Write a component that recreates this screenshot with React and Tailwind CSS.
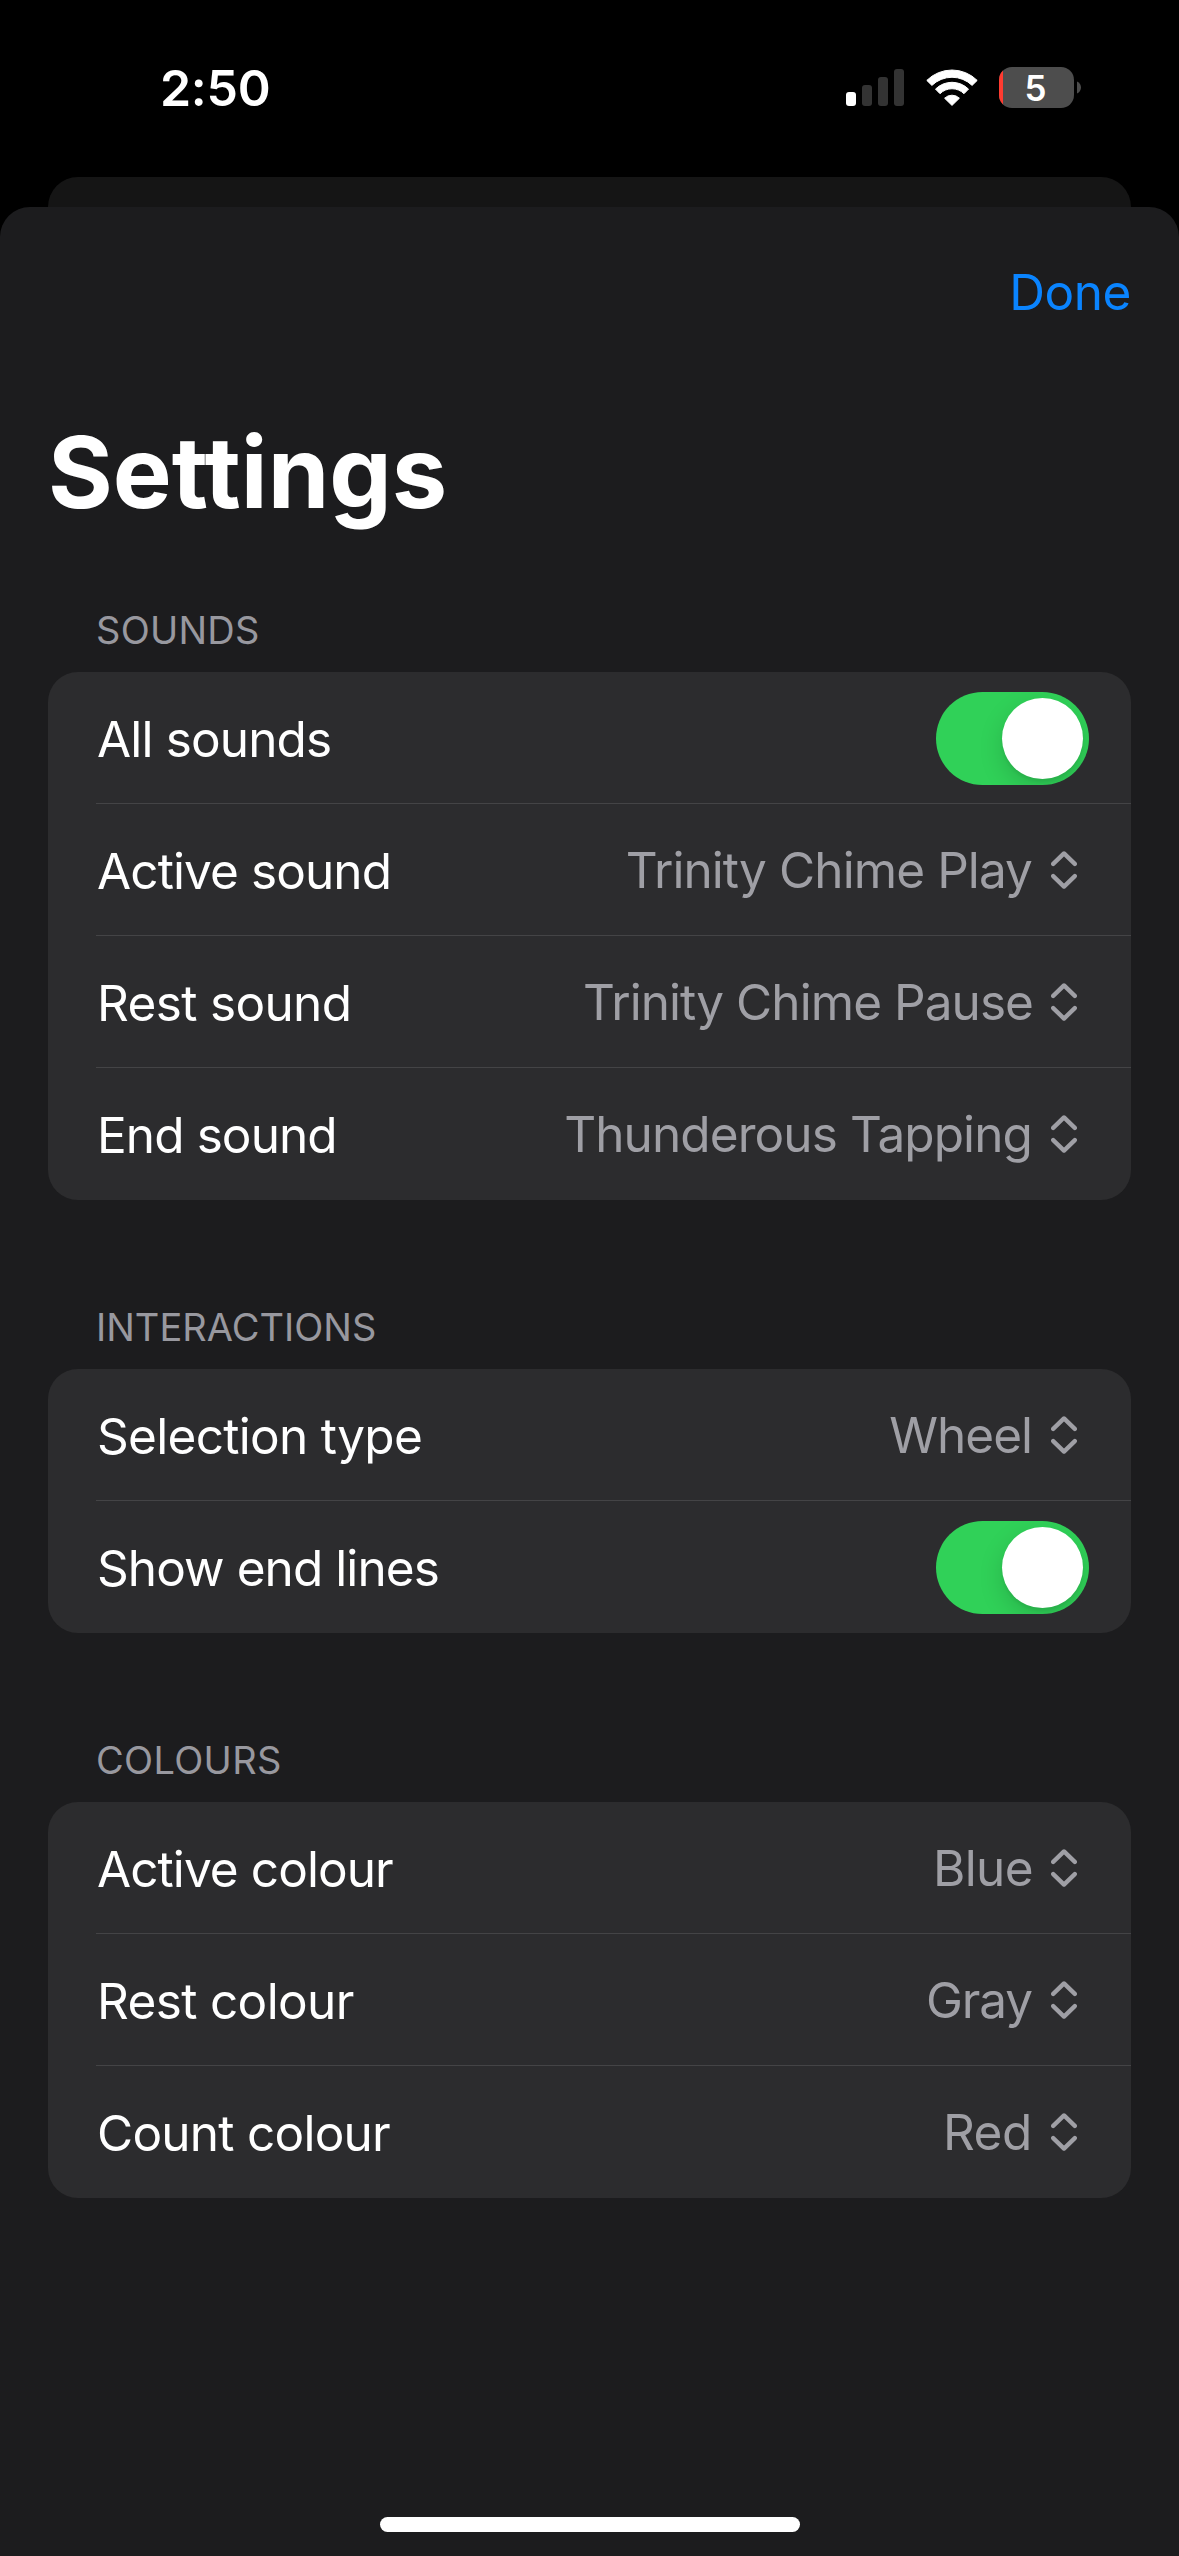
import React from "react";

const sections = [
  {
    title: "SOUNDS",
    tracking: "tracking-[0.25px]",
    rows: [
      { label: "All sounds", track: "tracking-[-0.85px]", toggle: true },
      { label: "Active sound", track: "tracking-[-0.9px]", value: "Trinity Chime Play", valueTrack: "tracking-[-0.91px]" },
      { label: "Rest sound", track: "tracking-[-0.65px]", value: "Trinity Chime Pause", valueTrack: "tracking-[-0.94px] -mr-px" },
      { label: "End sound", track: "tracking-[-0.9px]", value: "Thunderous Tapping", valueTrack: "tracking-[-0.9px]" },
    ],
  },
  {
    title: "INTERACTIONS",
    tracking: "tracking-[0.02px]",
    rows: [
      { label: "Selection type", track: "tracking-[-0.7px]", value: "Wheel", valueTrack: "tracking-[-1px]" },
      { label: "Show end lines", track: "tracking-[-0.92px]", toggle: true },
    ],
  },
  {
    title: "COLOURS",
    tracking: "tracking-[0.33px]",
    rows: [
      { label: "Active colour", track: "tracking-[-0.92px]", value: "Blue", valueTrack: "tracking-[-0.6px] -mr-px" },
      { label: "Rest colour", track: "tracking-[-0.65px]", value: "Gray", valueTrack: "tracking-[-1.1px]" },
      { label: "Count colour", track: "tracking-[-0.75px]", value: "Red", valueTrack: "tracking-[-0.4px]" },
    ],
  },
];

function Signal() {
  return (
    <div className="flex h-[37px] items-end gap-[6px]">
      <span className="h-[14px] w-[10px] rounded-[3px] bg-white" />
      <span className="h-[21px] w-[10px] rounded-[3px] bg-[#333333]" />
      <span className="h-[29px] w-[10px] rounded-[3px] bg-[#333333]" />
      <span className="h-[37px] w-[10px] rounded-[3px] bg-[#333333]" />
    </div>
  );
}

function Wifi() {
  return (
    <svg width="52" height="38" viewBox="0 0 52 38" fill="#fff" stroke="#fff" strokeWidth="1" strokeLinejoin="round" className="block">
      <path d="M0.8 11.4A35.8 35.8 0 0 1 51.2 11.4L46.1 16.4A28.9 28.9 0 0 0 5.9 16.4Z" />
      <path d="M9.5 20.1A23.4 23.4 0 0 1 42.5 20.1L38 24.7A17 17 0 0 0 14 24.7Z" />
      <path d="M18.6 29.2A10.6 10.6 0 0 1 33.4 29.2L26 36.4Z" />
    </svg>
  );
}

function Battery() {
  return (
    <div className="flex items-center gap-[3px]">
      <div className="flex h-[41px] w-[75px] overflow-hidden rounded-[13px] bg-[#4d4d4d]">
        <span className="w-[4px] bg-[#ff3b30]" />
        <span className="flex-1 pr-[6px] text-center text-[35px] font-semibold leading-[42px]">5</span>
      </div>
      <svg width="4" height="13" viewBox="0 0 4 13" className="block">
        <path d="M0 0.5C2.6 1.6 4 4 4 6.5S2.6 11.4 0 12.5Z" fill="#4d4d4d" />
      </svg>
    </div>
  );
}

function Chevrons() {
  return (
    <svg width="26" height="38" viewBox="0 0 26 38" fill="none" stroke="#9f9fa5" strokeWidth="4.3" strokeLinecap="round" strokeLinejoin="round" className="block">
      <path d="M2.2 12.9L13 2.4L23.8 12.9" />
      <path d="M2.2 25.1L13 35.6L23.8 25.1" />
    </svg>
  );
}

function Toggle() {
  return (
    <div className="mt-px flex h-[93px] w-[153px] items-center justify-end overflow-hidden rounded-full bg-[#30d158] pr-[6px]">
      <span className="size-[81px] rounded-full bg-white shadow-[0_9px_24px_rgba(0,0,0,0.15),0_3px_3px_rgba(0,0,0,0.06)]" />
    </div>
  );
}

function Row({ row, last }) {
  return (
    <div className="h-[132px] pl-12">
      <div
        className={
          "flex h-full items-center justify-between border-[#444446] " +
          (last ? "" : "border-b ") +
          (row.toggle ? "pr-[42px]" : "pr-[54px]")
        }
      >
        <span className={"pl-px pt-[2px] text-[49.5px] leading-[60px] text-white " + row.track}>{row.label}</span>
        {row.toggle ? (
          <Toggle />
        ) : (
          <div className="flex items-center gap-[19px]">
            <span className={"text-[49.5px] leading-[60px] text-[#9f9fa5] " + row.valueTrack}>{row.value}</span>
            <Chevrons />
          </div>
        )}
      </div>
    </div>
  );
}

export default function App() {
  return (
    <div className="flex h-[2556px] w-[1179px] flex-col overflow-hidden bg-black font-['Inter',sans-serif] text-white">
      <div className="flex h-[177px] items-start justify-between pl-[160px] pr-[98px]">
        <span className="pt-[58px] text-[50px] font-semibold leading-[60px] tracking-[-0.3px]">2:50</span>
        <div className="flex items-center gap-[22px] pt-[67px]">
          <Signal />
          <div className="flex items-center gap-[21px]">
            <Wifi />
            <Battery />
          </div>
        </div>
      </div>
      <div className="flex flex-1 flex-col">
        <div className="mx-12 -mb-[30px] h-[60px] rounded-t-[30px] bg-[#151515]" />
        <main className="flex flex-1 flex-col rounded-t-[30px] bg-[#1c1c1e] pt-[55px]">
          <div className="flex justify-end pr-[48px]">
            <button className="text-[49.5px] leading-[60px] tracking-[-0.47px] text-[#0a84ff]">Done</button>
          </div>
          <h1 className="mt-[90px] pl-[48px] text-[99px] font-bold leading-[120px]">Settings</h1>
          <div className="mt-[75px] flex flex-col gap-[104px] px-12">
            {sections.map((s) => (
              <section key={s.title}>
                <h2 className={"pl-12 text-[38px] leading-[46px] text-[#98989f] " + s.tracking}>{s.title}</h2>
                <div className="mt-[19px] rounded-[30px] bg-[#2c2c2e]">
                  {s.rows.map((r, i) => (
                    <Row key={r.label} row={r} last={i === s.rows.length - 1} />
                  ))}
                </div>
              </section>
            ))}
          </div>
          <div className="mx-auto mb-6 mt-auto h-[15px] w-[420px] rounded-full bg-white" />
        </main>
      </div>
    </div>
  );
}
